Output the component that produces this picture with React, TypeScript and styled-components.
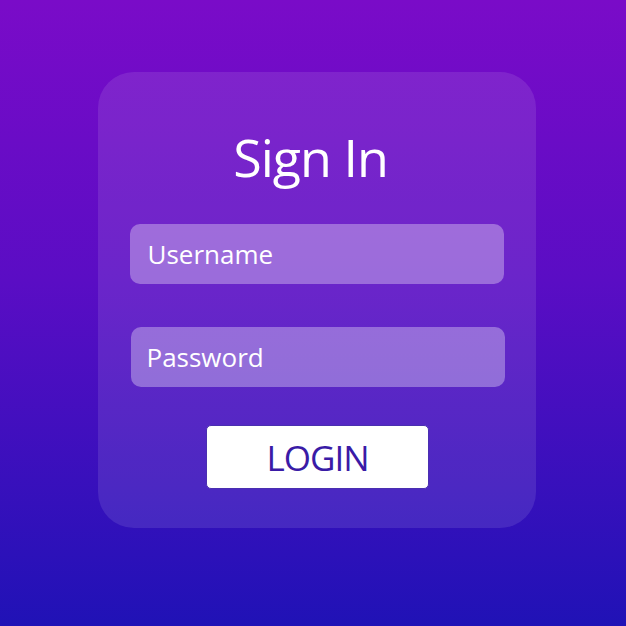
import React from 'react';
import styled, { createGlobalStyle } from 'styled-components';

const GlobalStyle = createGlobalStyle`
  html, body {
    margin: 0;
    padding: 0;
  }
  body {
    font-family: "Open Sans", "Liberation Sans", sans-serif;
  }
`;

const Page = styled.div`
  width: 626px;
  height: 626px;
  box-sizing: border-box;
  padding: 72px 0 0 98px;
  background: linear-gradient(180deg, #7a0bc8 0%, #5a0dc4 45%, #2012b6 100%);
  overflow: hidden;
`;

const Card = styled.form`
  width: 438px;
  height: 456px;
  box-sizing: border-box;
  padding: 50px 32px 0 31px;
  border-radius: 36px;
  background: rgba(255, 255, 255, 0.1);
  display: flex;
  flex-direction: column;
  align-items: center;
`;

const Title = styled.h1`
  margin: 0 12px 0 0;
  font-size: 52px;
  line-height: 70px;
  font-weight: 400;
  color: #ffffff;
  letter-spacing: -1px;
`;

const Field = styled.input<{ $shift: boolean }>`
  box-sizing: border-box;
  width: 374px;
  height: 60px;
  margin: ${p => (p.$shift ? 43 : 32)}px 0 0 ${p => (p.$shift ? 2 : 0)}px;
  padding: 0 ${p => (p.$shift ? 16 : 18)}px;
  border: none;
  border-radius: 10px;
  background: rgba(255, 255, 255, 0.33);
  font-family: "Open Sans", "Liberation Sans", sans-serif;
  font-size: 26px;
  color: #ffffff;
  outline: none;

  &::placeholder {
    color: #ffffff;
    opacity: 1;
  }
`;

const LoginButton = styled.button`
  box-sizing: border-box;
  width: 223px;
  height: 64px;
  margin: 38px 0 0 2px;
  padding: 0;
  border: 1px solid #4a2fb0;
  border-radius: 5px;
  background: #ffffff;
  color: #3a1ba6;
  font-family: "Open Sans", "Liberation Sans", sans-serif;
  font-size: 35px;
  font-weight: 400;
  letter-spacing: -1px;
  cursor: pointer;
`;

export default function App() {
  return (
    <>
      <GlobalStyle />
      <Page>
        <Card onSubmit={e => e.preventDefault()}>
          <Title>Sign In</Title>
          <Field $shift={false} type="text" placeholder="Username" />
          <Field $shift type="password" placeholder="Password" />
          <LoginButton type="submit">LOGIN</LoginButton>
        </Card>
      </Page>
    </>
  );
}
